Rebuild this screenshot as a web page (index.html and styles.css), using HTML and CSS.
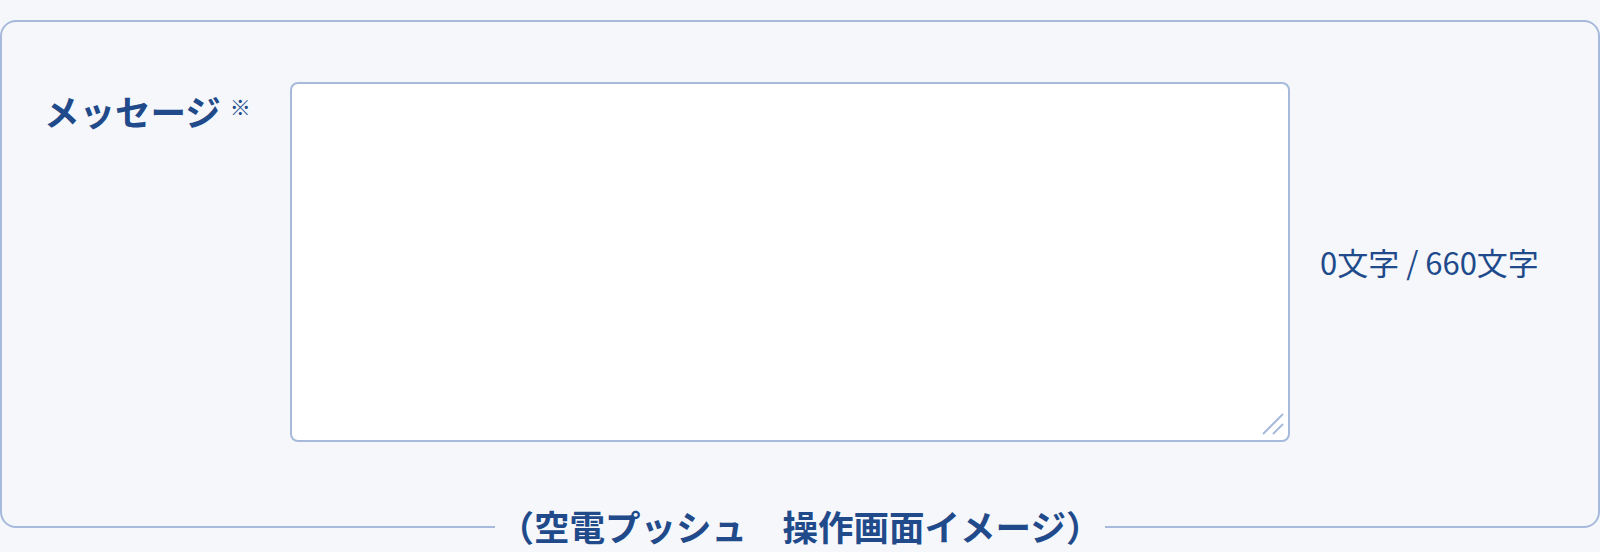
FILE: index.html
```html
<!DOCTYPE html>
<html lang="ja">
<head>
<meta charset="utf-8">
<title>メッセージ</title>
<link rel="stylesheet" href="styles.css">
</head>
<body>
<div class="panel">
  <div class="row">
    <div class="label">メッセージ<span class="req">※</span></div>
    <div class="field">
      <textarea class="message"></textarea>
      <svg class="grip" width="24" height="24" viewBox="0 0 24 24" aria-hidden="true">
        <line x1="2" y1="22" x2="22" y2="2"></line>
        <line x1="12" y1="22" x2="22" y2="12"></line>
      </svg>
    </div>
    <div class="count">0文字 / 660文字</div>
  </div>
</div>
<div class="caption"><span class="caption-text">（空電プッシュ　操作画面イメージ）</span></div>
</body>
</html>
```
FILE: styles.css
```css
html, body {
  margin: 0;
  padding: 0;
  background: #f5f7fb;
}
body {
  font-family: "Noto Sans CJK JP", "Noto Sans", sans-serif;
  color: #214a8b;
  min-height: 552px;
}
.panel {
  margin: 20px 0 0 0;
  height: 508px;
  box-sizing: border-box;
  border: 2px solid #a7badc;
  border-radius: 16px;
  padding: 60px 0 0 42px;
}
.row {
  display: flex;
  align-items: flex-start;
}
.label {
  flex: 0 0 246px;
  font-size: 35.5px;
  font-weight: 700;
  line-height: 1.5;
  margin-top: 2px;
  white-space: nowrap;
}
.req {
  font-size: 21px;
  font-weight: 400;
  margin-left: 9px;
  vertical-align: 11px;
}
.field {
  position: relative;
  flex: 0 0 1000px;
  height: 360px;
}
.message {
  display: block;
  width: 100%;
  height: 100%;
  box-sizing: border-box;
  border: 2px solid #a7badc;
  border-radius: 8px;
  background: #ffffff;
  resize: none;
  outline: none;
  margin: 0;
  padding: 10px;
  font-family: inherit;
  font-size: 24px;
  color: inherit;
}
.grip {
  position: absolute;
  right: 5px;
  bottom: 6px;
  stroke: #a7badc;
  stroke-width: 2;
}
.count {
  align-self: center;
  margin-left: 30px;
  font-size: 31px;
  line-height: 1.5;
  white-space: nowrap;
}
.caption {
  margin-top: -22px;
  text-align: center;
  font-size: 35.5px;
  font-weight: 700;
  line-height: 40px;
  white-space: nowrap;
}
.caption-text {
  display: inline-block;
  background: #f5f7fb;
  padding: 0 4px;
}
```
